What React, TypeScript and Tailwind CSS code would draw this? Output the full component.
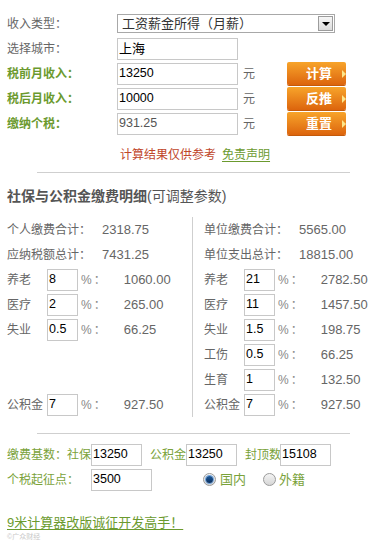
const FONT = { fontFamily: '"Liberation Sans", "Noto Sans CJK SC", sans-serif' };

function Field({ value, w = 'w-[121px]', gray = false }: { value: string; w?: string; gray?: boolean }) {
  return (
    <div
      className={`${w} shrink-0 h-[22px] border border-[#c8c8c8] bg-white flex items-center pl-[1px] text-[12.5px] leading-none ${gray ? 'text-[#555]' : 'text-black'}`}
    >
      {value}
    </div>
  );
}

function OrangeButton({ label }: { label: string }) {
  return (
    <div className="w-[59px] h-[23px] rounded-[2px] bg-gradient-to-b from-[#f7a42a] to-[#dc640c] flex items-center pl-[19px] text-white font-bold text-[13px] shadow-[0_1px_0_#c45a0a]">
      <span>{label}</span>
      <span className="ml-[10px] w-0 h-0 border-y-[4px] border-y-transparent border-l-[4px] border-l-[#fde68a]" />
    </div>
  );
}

function RateRow({ label, rate, amount }: { label: string; rate: string; amount: string }) {
  return (
    <div className="h-[25px] flex items-center whitespace-nowrap">
      <span className="w-[40px] shrink-0 text-[#666]">{label}</span>
      <Field value={rate} w="w-[31px]" />
      <span className="ml-[3px] text-[#888] tracking-[2px]">%：</span>
      <span className="ml-[16px] text-[13px] text-[#666]">{amount}</span>
    </div>
  );
}

function TotalRow({ label, value }: { label: string; value: string }) {
  return (
    <div className="h-[25px] flex items-center whitespace-nowrap">
      <span className="w-[95px] shrink-0">{label}</span>
      <span className="text-[13px]">{value}</span>
    </div>
  );
}

function Radio({ checked }: { checked: boolean }) {
  return (
    <span className="w-[13px] h-[13px] rounded-full border border-[#9a9a9a] bg-gradient-to-b from-[#f4f4f4] to-[#d6d6d6] flex items-center justify-center">
      {checked && <span className="w-[7px] h-[7px] rounded-full bg-gradient-to-b from-[#1c5a9c] to-[#0b2f5e] ring-1 ring-[#6fa3dc]" />}
    </span>
  );
}

export default function App() {
  return (
    <div className="w-[387px] h-[542px] bg-white text-[12px] text-[#666] overflow-hidden relative" style={FONT}>
      {/* top form */}
      <div className="pt-[11px] pl-[7px]">
        <div className="h-[25px] flex items-center">
          <span className="w-[110px]">收入类型：</span>
          <div className="w-[218px] h-[19px] border border-[#a8a8a8] flex items-center justify-between text-[13px] text-[#333]">
            <span className="pl-[4px]">工资薪金所得（月薪）</span>
            <span className="w-[15px] h-[15px] mr-[1px] border border-[#9c9c9c] bg-gradient-to-b from-[#f6f6f6] to-[#dcdcdc] flex items-center justify-center">
              <span className="w-0 h-0 border-x-[4px] border-x-transparent border-t-[4px] border-t-black" />
            </span>
          </div>
        </div>
        <div className="h-[25px] flex items-center">
          <span className="w-[110px]">选择城市：</span>
          <div className="w-[121px] h-[22px] border border-[#c8c8c8] flex items-center pl-[1px] text-[13px] text-black">上海</div>
        </div>
        {[
          ['税前月收入：', '13250', '计算', false],
          ['税后月收入：', '10000', '反推', false],
          ['缴纳个税：', '931.25', '重置', true],
        ].map(([label, value, btn, gray]) => (
          <div key={label as string} className="h-[25px] flex items-center">
            <span className="w-[110px] font-bold text-[#6b9a2e]">{label}</span>
            <Field value={value as string} gray={gray as boolean} />
            <span className="ml-[5px] w-[44px]">元</span>
            <OrangeButton label={btn as string} />
          </div>
        ))}
        <div className="h-[38px] flex items-center pl-[113px]">
          <span className="text-[#c0462a]">计算结果仅供参考</span>
          <span className="ml-[6px] text-[#6b9a2e] underline underline-offset-2">免责声明</span>
        </div>
      </div>

      <div className="mx-[37px] w-[313px] border-t border-[#cfcfcf] mt-[-2px]" />

      {/* breakdown */}
      <div className="pl-[7px] pt-[13px] h-[34px] flex items-start">
        <span className="text-[14px] font-bold text-[#555]">社保与公积金缴费明细</span>
        <span className="text-[14px] text-[#555]">(可调整参数)</span>
      </div>

      <div className="flex pl-[7px] mt-[10px]">
        <div className="w-[186px] border-r border-[#cfcfcf] h-[200px]">
          <TotalRow label="个人缴费合计：" value="2318.75" />
          <TotalRow label="应纳税额总计：" value="7431.25" />
          <RateRow label="养老" rate="8" amount="1060.00" />
          <RateRow label="医疗" rate="2" amount="265.00" />
          <RateRow label="失业" rate="0.5" amount="66.25" />
          <div className="h-[50px]" />
          <RateRow label="公积金" rate="7" amount="927.50" />
        </div>
        <div className="pl-[11px]">
          <TotalRow label="单位缴费合计：" value="5565.00" />
          <TotalRow label="单位支出总计：" value="18815.00" />
          <RateRow label="养老" rate="21" amount="2782.50" />
          <RateRow label="医疗" rate="11" amount="1457.50" />
          <RateRow label="失业" rate="1.5" amount="198.75" />
          <RateRow label="工伤" rate="0.5" amount="66.25" />
          <RateRow label="生育" rate="1" amount="132.50" />
          <RateRow label="公积金" rate="7" amount="927.50" />
        </div>
      </div>

      <div className="mx-[37px] w-[313px] border-t border-[#cfcfcf] mt-[16px]" />

      {/* base settings */}
      <div className="pl-[7px] pt-[8px] text-[#7aa23a]">
        <div className="h-[25px] flex items-center whitespace-nowrap">
          <span className="w-[84px] shrink-0">缴费基数：社保</span>
          <Field value="13250" w="w-[51px]" />
          <span className="ml-[8px] w-[36px] shrink-0">公积金</span>
          <Field value="13250" w="w-[51px]" />
          <span className="ml-[8px] w-[35px] shrink-0">封顶数</span>
          <Field value="15108" w="w-[51px]" />
        </div>
        <div className="h-[25px] flex items-center whitespace-nowrap">
          <span className="w-[84px] shrink-0">个税起征点：</span>
          <Field value="3500" w="w-[61px]" />
          <span className="ml-[51px] flex items-center gap-[4px]">
            <Radio checked />
            <span className="text-[13px]">国内</span>
          </span>
          <span className="ml-[17px] flex items-center gap-[3px]">
            <Radio checked={false} />
            <span className="text-[13px]">外籍</span>
          </span>
        </div>
        <div className="pt-[22px] leading-[18px]">
          <span className="text-[13px] text-[#6b9a2e] underline underline-offset-2">9米计算器改版诚征开发高手！</span>
        </div>
        <div className="mt-[1px] text-[7px] text-[#c8c8c8] leading-none">©广众财经</div>
      </div>
    </div>
  );
}
